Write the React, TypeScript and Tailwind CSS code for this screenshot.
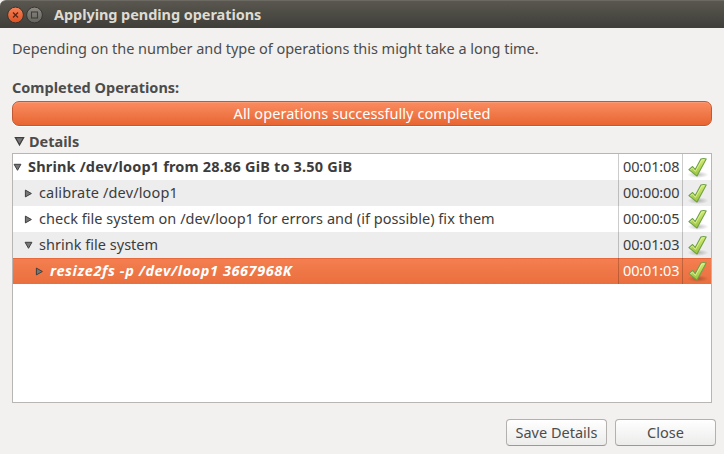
import { useId } from "react";

type Row = {
  label: string;
  time: string;
  indent: string;
  open: boolean;
  row: string;
  text: string;
};

const rows: Row[] = [
  {
    label: "Shrink /dev/loop1 from 28.86 GiB to 3.50 GiB",
    time: "00:01:08",
    indent: "pl-0",
    open: true,
    row: "bg-white text-[#3c3c3c]",
    text: "font-bold tracking-[0.18px]",
  },
  {
    label: "calibrate /dev/loop1",
    time: "00:00:00",
    indent: "pl-[11px]",
    open: false,
    row: "bg-[#ededed] text-[#3c3c3c]",
    text: "tracking-[0.15px]",
  },
  {
    label: "check file system on /dev/loop1 for errors and (if possible) fix them",
    time: "00:00:05",
    indent: "pl-[11px]",
    open: false,
    row: "bg-white text-[#3c3c3c]",
    text: "tracking-[0.03px]",
  },
  {
    label: "shrink file system",
    time: "00:01:03",
    indent: "pl-[11px]",
    open: true,
    row: "bg-[#ededed] text-[#3c3c3c]",
    text: "tracking-[0.02px]",
  },
  {
    label: "resize2fs -p /dev/loop1 3667968K",
    time: "00:01:03",
    indent: "pl-[22px]",
    open: false,
    row: "bg-linear-to-b from-[#f47f50] to-[#ea6f3e] text-white shadow-[inset_0_1px_0_#e8693a]",
    text: "font-bold italic tracking-[0.58px]",
  },
];

function Arrow({ open, size }: { open: boolean; size: number }) {
  return (
    <svg width={size} height={size} viewBox="0 0 9 9" className="shrink-0">
      <path
        d={open ? "M1.1 1.3H7.9L4.5 7.3Z" : "M1.4 1.1V7.9L7.4 4.5Z"}
        fill="#777"
        stroke="#3f3f3f"
        strokeWidth="1"
      />
    </svg>
  );
}

function Check() {
  const id = useId();
  return (
    <svg width="24" height="24" viewBox="0 0 24 24" className="mt-px">
      <defs>
        <linearGradient id={id + "g"} x1="0" y1="0" x2="0" y2="1">
          <stop offset="0" stopColor="#d3ec72" />
          <stop offset="1" stopColor="#9ac43c" />
        </linearGradient>
        <radialGradient id={id + "s"}>
          <stop offset="0" stopColor="#000" stopOpacity="0.25" />
          <stop offset="1" stopColor="#000" stopOpacity="0" />
        </radialGradient>
      </defs>
      <ellipse cx="12" cy="18.7" rx="10.5" ry="3.4" fill={`url(#${id}s)`} />
      <path
        d="M2.9 13.6L6.6 10.5L9.2 13.6L14.9 3.1Q17.8 1.8 20.2 3.1L11 20.1Z"
        fill={`url(#${id}g)`}
        stroke="#6f9f4a"
        strokeWidth="1.1"
        strokeLinejoin="round"
      />
      <path d="M4.5 13.6L6.5 12L9.4 15.4L15.8 4L18.4 3.7" fill="none" stroke="#e4f5a0" strokeWidth="0.8" />
    </svg>
  );
}

export default function App() {
  return (
    <div className="flex h-[454px] w-[724px] flex-col overflow-hidden bg-[#f2f1f0] font-['Noto_Sans',sans-serif] text-[14.5px] leading-5 whitespace-nowrap text-[#4c4c4c]">
      <header className="flex h-7 shrink-0 items-center rounded-tl-md border-t border-[#6b6961] bg-linear-to-b from-[#59574f] to-[#3f3e39] pl-[7px]">
        <svg width="36" height="18" viewBox="0 0 36 18">
          <defs>
            <linearGradient id="closeFill" x1="0" y1="0" x2="0" y2="1">
              <stop offset="0" stopColor="#f5835b" />
              <stop offset="1" stopColor="#e04f1d" />
            </linearGradient>
            <linearGradient id="maxFill" x1="0" y1="0" x2="0" y2="1">
              <stop offset="0" stopColor="#8c8a83" />
              <stop offset="1" stopColor="#64635d" />
            </linearGradient>
          </defs>
          <circle cx="8.5" cy="9" r="7.9" fill="url(#closeFill)" stroke="#373530" />
          <path d="M6 6.5L11 11.5M11 6.5L6 11.5" stroke="#572817" strokeWidth="1.3" />
          <circle cx="27.5" cy="9" r="7.9" fill="url(#maxFill)" stroke="#373530" />
          <rect x="24.5" y="6" width="6" height="6" fill="none" stroke="#3e3d38" strokeWidth="1.1" />
        </svg>
        <h1 className="pb-0.5 pl-[11px] font-bold tracking-[-0.06px] text-[#dfdbd2]">Applying pending operations</h1>
      </header>
      <main className="flex flex-1 flex-col px-3 pt-[10px]">
        <p className="tracking-[-0.04px]">
          Depending on the number and type of operations this might take a long time.
        </p>
        <h2 className="mt-[19px] font-bold">Completed Operations:</h2>
        <div className="mt-[4px] flex h-[25px] items-center justify-center rounded-[7px] border border-[#c05a34] bg-linear-to-b from-[#fa8c5f] to-[#e76632] text-white shadow-[inset_0_1px_0_#fb9b75,0_1px_0_#fff]">
          <span className="pb-0.5 tracking-[0.06px]">All operations successfully completed</span>
        </div>
        <div className="mt-[6px] flex h-5 items-center pl-[2px]">
          <div className="pb-0.5">
            <Arrow open size={11} />
          </div>
          <span className="pb-0.5 pl-1 font-bold">Details</span>
        </div>
        <section className="mt-[1px] h-[250px] w-[700px] border border-[#b8b5b2] bg-white">
          {rows.map((r) => (
            <div key={r.label} className={`flex h-[26px] ${r.row}`}>
              <div className={`flex flex-1 items-center ${r.indent}`}>
                <Arrow open={r.open} size={9} />
                <span className={`pb-0.5 pl-[6px] ${r.text}`}>{r.label}</span>
              </div>
              <div className="flex w-16 items-center border-l border-black/20 pb-0.5 pl-1 tracking-[-0.15px]">
                {r.time}
              </div>
              <div className="flex w-[29px] items-center border-l border-black/20 pl-[3px]">
                <Check />
              </div>
            </div>
          ))}
        </section>
        <footer className="mt-4 -mr-1 flex justify-end gap-2">
          <button className="h-[27px] w-[101px] rounded-[4px] border border-[#b3b0ad] border-b-[#9b9895] bg-linear-to-b from-white to-[#ececeb] pb-0.5">
            Save Details
          </button>
          <button className="h-[27px] w-[101px] rounded-[4px] border border-[#b3b0ad] border-b-[#9b9895] bg-linear-to-b from-white to-[#ececeb] pb-0.5">
            Close
          </button>
        </footer>
      </main>
    </div>
  );
}
